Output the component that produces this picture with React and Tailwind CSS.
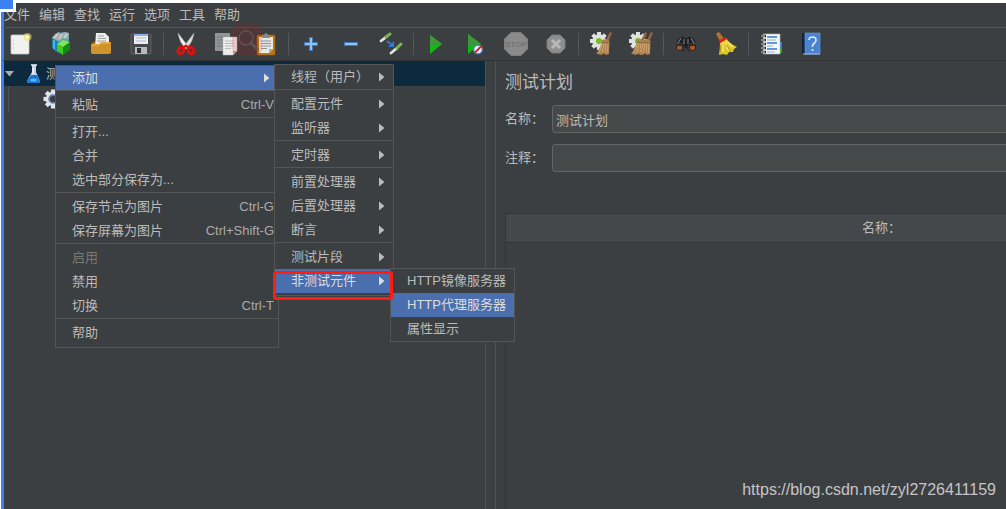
import React from 'react';
import clsx from 'clsx';

const MENU_BAR = ['文件', '编辑', '查找', '运行', '选项', '工具', '帮助'];

const MAIN_MENU = [
  [{ label: '添加', arrow: true, active: true }],
  [{ label: '粘贴', shortcut: 'Ctrl-V' }],
  [{ label: '打开...' }, { label: '合并' }, { label: '选中部分保存为...' }],
  [
    { label: '保存节点为图片', shortcut: 'Ctrl-G' },
    { label: '保存屏幕为图片', shortcut: 'Ctrl+Shift-G' },
  ],
  [{ label: '启用', disabled: true }, { label: '禁用' }, { label: '切换', shortcut: 'Ctrl-T' }],
  [{ label: '帮助' }],
];

const ADD_MENU = [
  [{ label: '线程（用户）', arrow: true }],
  [{ label: '配置元件', arrow: true }, { label: '监听器', arrow: true }],
  [{ label: '定时器', arrow: true }],
  [
    { label: '前置处理器', arrow: true },
    { label: '后置处理器', arrow: true },
    { label: '断言', arrow: true },
  ],
  [
    { label: '测试片段', arrow: true },
    { label: '非测试元件', arrow: true, active: true },
  ],
];

const NON_TEST_MENU = [
  [{ label: 'HTTP镜像服务器' }, { label: 'HTTP代理服务器', active: true }, { label: '属性显示' }],
];

const Icon = ({ children }) => (
  <svg viewBox="0 0 24 24" className="w-6 h-6" aria-hidden="true">
    {children}
  </svg>
);

const GEAR_TEETH = [0, 45, 90, 135, 180, 225, 270, 315];

const Gear = ({ cx, cy, r, fill, hole }) => (
  <g>
    {GEAR_TEETH.map((a) => (
      <rect
        key={a}
        x={cx - r * 0.22}
        y={cy - r}
        width={r * 0.44}
        height={r}
        fill={fill}
        transform={`rotate(${a} ${cx} ${cy})`}
      />
    ))}
    <circle cx={cx} cy={cy} r={r * 0.76} fill={fill} />
    <circle cx={cx} cy={cy} r={r * 0.34} fill={hole} />
  </g>
);

const Broom = ({ x = 0 }) => (
  <g transform={`translate(${x} 0)`}>
    <path d="M20 0 22 1 18.500 9 16 8Z" fill="#9a6638" />
    <path d="M12 8Q16 6 19.500 9L19 22 16 23 14 21.500 11 23 6 21.500Q11 16 12 8Z" fill="#ab8150" />
    <path d="M13 10 9 20.500M14.500 10 12 20.500M16 10 15 20.500M18 10 17.500 20.500" stroke="#d3ac74" strokeWidth="0.9" fill="none" />
    <path d="M12 10.500 19 11" stroke="#76512c" strokeWidth="0.8" />
  </g>
);

const NewIcon = () => (
  <Icon>
    <rect x="2" y="3" width="18" height="19" rx="1" fill="#f1f1ef" stroke="#c9c9c7" strokeWidth="0.8" />
    <path d="M4 8h1M4 12h1M4 16h1" stroke="#bbb" />
    <circle cx="18.5" cy="5" r="4" fill="#efe06a" opacity="0.6" />
    <circle cx="18.5" cy="5" r="2" fill="#fffbc0" />
  </Icon>
);

const TemplatesIcon = () => (
  <Icon>
    <path d="M3 6 10 9v12L6 19 3 15Z" fill="#1684b8" />
    <path d="M5 8v9" stroke="#65c4e4" strokeWidth="1.500" />
    <path d="m3 6 4-4 7-2 6 1v8l-9 2Z" fill="#5e9fae" />
    <path d="m3 6 3-4 4-2 2 2 4-2 4 1-1 6-5-1-4 3Z" fill="#a5aeae" />
    <path d="m5 6 4-4M10 7l3-5M15 6l3-4" stroke="#d4dad9" strokeWidth="1.300" />
    <path d="m8 12 6 3v8l-6-4Z" fill="#40cc20" />
    <path d="m14 15 7-5v8l-7 5Z" fill="#128d10" />
    <path d="m8 12 6-4 7 2-7 5Z" fill="#7bea50" />
  </Icon>
);

const OpenIcon = () => (
  <Icon>
    <path d="M3 10h18v10l-2 2H3Z" fill="#9b6813" />
    <path d="M7 1h9l4 4v9H6Z" fill="#eeeeec" />
    <path d="M9 4h6M9 6.500h8M8 9h9" stroke="#969696" strokeWidth="0.9" />
    <path d="M2 12h8l2-2h10v11q-1 1-2 1H4q-2 0-2-2Z" fill="#cf932b" />
    <path d="M3 13h7l2-2h9" stroke="#efc06a" fill="none" />
  </Icon>
);

const SaveIcon = () => (
  <Icon>
    <rect x="2" y="2" width="20" height="20" rx="1" fill="#47484b" stroke="#6c6d70" strokeWidth="0.7" />
    <path d="M5 2h14v10H5Z" fill="#eceef1" />
    <path d="M5 2h14v2H5Z" fill="#8aafe0" />
    <path d="M7 6h10M7 9h10" stroke="#b7bcc2" />
    <path d="M6 15h12v7H6Z" fill="#b9babb" />
    <path d="M8 16h4v5H8Z" fill="#2f3032" />
  </Icon>
);

const CutIcon = () => (
  <Icon>
    <path d="M4 1Q5 10 12 17l2.500-2Z" fill="#f0f0ee" stroke="#aaa" strokeWidth="0.5" />
    <path d="M20 1Q19 10 12 17l-2.500-2Z" fill="#deded9" stroke="#aaa" strokeWidth="0.5" />
    <ellipse cx="7" cy="18.500" rx="2.800" ry="3.400" fill="none" stroke="#dc1212" strokeWidth="3" transform="rotate(35 7 18.500)" />
    <ellipse cx="17" cy="18.500" rx="2.800" ry="3.400" fill="none" stroke="#dc1212" strokeWidth="3" transform="rotate(-35 17 18.500)" />
    <path d="m9 15.500 3-1.500 3 1.500" stroke="#dc1212" strokeWidth="2.500" fill="none" />
  </Icon>
);

const CopyIcon = () => (
  <Icon>
    <path d="M1 1h15v18H1Z" fill="#929594" />
    <path d="M3 5h10M3 8h10M3 11h10M3 14h7" stroke="#73787a" />
    <path d="M9 5h14v14l-4 4H9Z" fill="#ececea" stroke="#bbb" strokeWidth="0.5" />
    <path d="M11 9h9M11 11.500h9M11 14h9M11 16.500h6" stroke="#b5b5b5" strokeWidth="0.9" />
    <path d="M19 23v-4h4Z" fill="#aaa" />
  </Icon>
);

const PasteIcon = () => (
  <Icon>
    <rect x="3" y="3" width="18" height="20" rx="1" fill="#bd7814" stroke="#8f5a0d" strokeWidth="0.7" />
    <path d="M5 5h14v12l-4 4H5Z" fill="#e8e8e5" />
    <path d="M7 9h10M7 11.500h10M7 14h10M7 16.500h6" stroke="#929292" strokeWidth="1" />
    <path d="M15 21v-4h4Z" fill="#aaa" />
    <path d="M8 6V3h2q2-4 4 0h2v3Z" fill="#86888a" />
  </Icon>
);

const PlusIcon = () => (
  <Icon>
    <path d="M12 5v14M5 12h14" stroke="#3d78bd" strokeWidth="4" />
    <path d="M12 6v12M6 12h12" stroke="#94c1f0" strokeWidth="2" />
  </Icon>
);

const MinusIcon = () => (
  <Icon>
    <path d="M5 12h14" stroke="#3d78bd" strokeWidth="4" />
    <path d="M6 12h12" stroke="#94c1f0" strokeWidth="2" />
  </Icon>
);

const ToggleIcon = () => (
  <Icon>
    <path d="m2 9 5-4" stroke="#dfe6dc" strokeWidth="2.800" strokeLinecap="round" />
    <path d="m7 5 4-3" stroke="#78b552" strokeWidth="3" strokeLinecap="round" />
    <path d="m12 21 6-5" stroke="#dfe6dc" strokeWidth="2.800" strokeLinecap="round" />
    <path d="m18 16 4-4" stroke="#78b552" strokeWidth="3" strokeLinecap="round" />
    <path d="m8 9 5 4" stroke="#2d7be5" strokeWidth="1.800" />
    <path d="M15 9v6H9Z" fill="#2d7be5" />
  </Icon>
);

const StartIcon = () => (
  <Icon>
    <path d="m6 3 12 9-12 10Z" fill="#10bb14" />
    <path d="m6 3 12 9-12 2Z" fill="#3d963b" />
  </Icon>
);

const StartNoPausesIcon = () => (
  <Icon>
    <path d="m4 2 13 10L4 22Z" fill="#10b414" />
    <path d="m4 2 13 10-13 2Z" fill="#3d963b" />
    <circle cx="14" cy="17.500" r="4.300" fill="#e9edf4" stroke="#4f7dbb" strokeWidth="1.200" />
    <path d="m11 20.500 6-6" stroke="#d71d24" strokeWidth="1.800" />
  </Icon>
);

const StopIcon = () => (
  <Icon>
    <path d="M7 0.500h10l6.500 6.500v10L17 23.500H7L0.500 17V7Z" fill="#8b8b8b" stroke="#7e7e7e" />
    <text x="12" y="15" textAnchor="middle" fontSize="8" fontWeight="bold" fill="#727272" fontFamily="Liberation Sans, sans-serif">
      STOP
    </text>
  </Icon>
);

const ShutdownIcon = () => (
  <Icon>
    <path d="M8 3h8l5 5v8l-5 5H8l-5-5V8Z" fill="#8e8e8e" stroke="#7b7b7b" />
    <path d="m8 8 8 8m0-8-8 8" stroke="#b9b9b9" strokeWidth="3" />
  </Icon>
);

const ClearIcon = () => (
  <Icon>
    <Gear cx={10} cy={9} r={9} fill="#e0e2df" hole="#78bd26" />
    <Broom x={1} />
  </Icon>
);

const ClearAllIcon = () => (
  <Icon>
    <Gear cx={9} cy={9} r={9} fill="#e0e2df" hole="#78bd26" />
    <Broom x={-4} />
    <Broom x={2} />
  </Icon>
);

const SearchIcon = () => (
  <Icon>
    <path d="M4 7 7 5h3l2 2 2-2h3l3 2 3 8-4 5-5-1-2-4-2 4-5 1-4-5Z" fill="#1d1e20" />
    <path d="m7 6-4 7M17 6l4 7M10 7v5M14 7v5" stroke="#77797b" strokeWidth="1.200" />
    <ellipse cx="5.500" cy="15.500" rx="4.500" ry="3.800" fill="#17181a" stroke="#4c4e50" />
    <ellipse cx="18.500" cy="15.500" rx="4.500" ry="3.800" fill="#17181a" stroke="#4c4e50" />
    <ellipse cx="5.500" cy="15.800" rx="2.800" ry="2.200" fill="#a65a29" />
    <ellipse cx="18.500" cy="15.800" rx="2.800" ry="2.200" fill="#a65a29" />
  </Icon>
);

const SearchResetIcon = () => (
  <Icon>
    <path d="M2 2Q4-1 6 1l4 6-4 2Z" fill="#b07530" />
    <path d="M6 10 12 6Q16 12 23 15l-3 2-1 3-4 0-2 3-4-1-4 1Q6 17 6 10Z" fill="#dec62a" />
    <path d="m9 10 0 10M11 10l3 8M12 9l7 6" stroke="#f8ed78" strokeWidth="1.200" />
    <path d="m5 10 7-4" stroke="#d9221a" strokeWidth="2.800" />
    <path d="m7 13-1 8M12 13l5 6" stroke="#aa8c10" strokeWidth="0.8" />
  </Icon>
);

const FunctionIcon = () => (
  <Icon>
    <path d="M20 10h3v5h-3Z" fill="#267ce0" />
    <path d="M20 15h3v6h-3Z" fill="#22a322" />
    <rect x="4" y="2" width="17" height="20" fill="#f7f7f8" stroke="#b5b7bb" strokeWidth="0.6" />
    <path d="M8 5h10M8 11h10M8 17h10" stroke="#2f78d0" strokeWidth="1.300" />
    <path d="M8 8h9M8 14h6M8 20h8" stroke="#8daedb" strokeWidth="1" />
    <path d="M2 4h5M2 8h5M2 12h5M2 16h5M2 20h5" stroke="#27292b" strokeWidth="2.400" />
    <path d="M2 4h4M2 8h4M2 12h4M2 16h4M2 20h4" stroke="#dedede" strokeWidth="1.200" />
  </Icon>
);

const HelpIcon = () => (
  <Icon>
    <path d="M3 1h4v21H3Z" fill="#14243a" />
    <path d="M6 1h15v21H6Z" fill="#4a84d0" stroke="#5f96dc" strokeWidth="0.7" />
    <path d="M4 22h17" stroke="#a9bdd8" />
    <path d="M10 8q0-3 3.500-3T17 8q0 2-2 3.500T13.500 15" stroke="#dfeafa" strokeWidth="1.600" fill="none" />
    <circle cx="13.500" cy="18" r="1.100" fill="#dfeafa" />
  </Icon>
);

const TOOLBAR = [
  [
    { name: '新建', icon: NewIcon },
    { name: '模板', icon: TemplatesIcon },
    { name: '打开', icon: OpenIcon },
    { name: '保存', icon: SaveIcon },
  ],
  [
    { name: '剪切', icon: CutIcon },
    { name: '复制', icon: CopyIcon },
    { name: '粘贴', icon: PasteIcon },
  ],
  [
    { name: '展开', icon: PlusIcon },
    { name: '收起', icon: MinusIcon },
    { name: '切换', icon: ToggleIcon },
  ],
  [
    { name: '启动', icon: StartIcon },
    { name: '不停顿开始', icon: StartNoPausesIcon },
    { name: '停止', icon: StopIcon },
    { name: '关闭', icon: ShutdownIcon },
  ],
  [
    { name: '清除', icon: ClearIcon },
    { name: '清除全部', icon: ClearAllIcon },
  ],
  [
    { name: '查找', icon: SearchIcon },
    { name: '重置查找', icon: SearchResetIcon },
  ],
  [
    { name: '函数助手', icon: FunctionIcon },
    { name: '帮助', icon: HelpIcon },
  ],
];

const Toolbar = () => (
  <div className="relative flex items-center gap-1 h-[34px] -ml-px border-t border-b border-t-[#515354] border-b-[#323435] shrink-0">
    {TOOLBAR.map((group, i) => (
      <React.Fragment key={i}>
        {i > 0 && <span className="w-px h-[22px] bg-[#55585a] shrink-0" />}
        {group.map(({ name, icon: ToolIcon }) => (
          <button key={name} type="button" aria-label={name} className="w-9 h-8 flex items-center justify-center shrink-0">
            <ToolIcon />
          </button>
        ))}
      </React.Fragment>
    ))}
    {/* Faded lens between copy and paste */}
    <div className="absolute left-[229px] -top-1 w-[30px] h-[31px] rounded-md bg-red-700/15">
      <svg viewBox="0 0 30 31" className="w-full h-full" aria-hidden="true">
        <circle cx="14" cy="14" r="7" fill="none" stroke="#5f5254" strokeWidth="1.500" />
        <path d="m19 19 6 6" stroke="#5f5254" strokeWidth="3" strokeLinecap="round" />
      </svg>
    </div>
  </div>
);

const MenuItem = ({ label, shortcut, arrow, active, disabled }) => (
  <button
    type="button"
    role="menuitem"
    disabled={disabled}
    className={clsx(
      'flex items-center justify-between w-full h-6 pl-4 text-left whitespace-nowrap',
      active ? 'bg-[#4b6eaf] text-[#dddddd]' : disabled ? 'text-[#777777]' : 'text-[#bbbbbb]',
      arrow ? 'pr-2' : 'pr-1'
    )}
  >
    <span>{label}</span>
    {shortcut && <span className="text-[#aaaaaa]">{shortcut}</span>}
    {arrow && (
      <svg viewBox="0 0 6 10" className="w-1.5 h-2.5" aria-hidden="true">
        <path d="M0 0.500 5.500 5 0 9.500Z" fill={active ? '#dddddd' : '#bbbbbb'} />
      </svg>
    )}
  </button>
);

const PopupMenu = ({ groups, label, className }) => (
  <div role="menu" aria-label={label} className={clsx('absolute bg-[#3c3f41] border border-[#555555]', className)}>
    {groups.map((group, i) => (
      <div key={i} className={clsx(i > 0 && 'border-t border-[#555555] pt-0.5')}>
        {group.map((item) => (
          <MenuItem key={item.label} {...item} />
        ))}
      </div>
    ))}
  </div>
);

const TestTree = () => (
  <div className="w-[482px] shrink-0 border-r border-[#515151]">
    <div className="flex items-center h-[25px] bg-[#0d293e]">
      <svg viewBox="0 0 9 6" className="w-[9px] h-1.5 ml-px mr-3" aria-hidden="true">
        <path d="M0 0h9L4.500 5.500Z" fill="#adadad" />
      </svg>
      <svg viewBox="0 0 16 20" className="w-4 h-5 mr-1" aria-hidden="true">
        <path d="M6 1h4v7l4 9q0 2-2 2H3q-2 0-2-2l5-9Z" fill="#c5d6e8" />
        <path d="m5 11h6l3 6q0 2-2 2H3q-2 0-2-2Z" fill="#1975d5" />
        <path d="M5 1h6" stroke="#eef3f8" strokeWidth="1.500" />
        <path d="M7 4v6" stroke="#fff" />
        <ellipse cx="7.500" cy="16" rx="3.500" ry="1.500" fill="#5bb4ff" />
      </svg>
      <span className="text-[#bbbbbb]">测</span>
    </div>
    <div className="ml-1 h-[26px] border-l border-[#505354] pl-[34px] flex items-center">
      <svg viewBox="0 0 20 20" className="w-5 h-5" aria-hidden="true">
        <Gear cx={10} cy={10} r={9.5} fill="#dfe5ec" hole="#3c3f41" />
        <circle cx="10" cy="10" r="4" fill="none" stroke="#5879a8" strokeWidth="1.500" />
      </svg>
    </div>
  </div>
);

const Field = ({ id, label, value }) => (
  <div className="flex items-center">
    <label htmlFor={id} className="w-[47px] shrink-0">{label}</label>
    <input
      id={id}
      type="text"
      defaultValue={value}
      className="flex-1 h-7 px-[3px] rounded-[3px] bg-[#45494a] border border-[#646464] text-[#bbbbbb] outline-none"
    />
  </div>
);

const PlanPanel = () => (
  <div className="flex-1 min-w-0 overflow-hidden flex flex-col ml-[9px] border-l border-[#515151] pl-[9px]">
    {/* The form keeps its own width and runs past the window edge */}
    <div className="min-w-[752px] flex-1 flex flex-col">
      <h1 className="text-[17px] leading-6 mt-[10px] mb-[10px]">测试计划</h1>
      <div className="flex flex-col gap-[11px]">
        <Field id="plan-name" label="名称：" value="测试计划" />
        <Field id="plan-comment" label="注释：" value="" />
      </div>
      <div className="flex-1 mt-[41px] border-l border-t border-[#323435]">
        <table className="w-full">
          <thead>
            <tr>
              <th className="h-7 p-0 font-normal bg-[#45484a] border-b border-[#323435]">名称：</th>
            </tr>
          </thead>
        </table>
      </div>
    </div>
  </div>
);

const App = () => {
  return (
    <div className="relative min-h-screen flex flex-col bg-white pt-[3px] pl-px overflow-hidden text-[13px] text-[#bbbbbb] font-['Liberation_Sans','Noto_Sans_CJK_SC',sans-serif]">
      <div className="flex-1 flex flex-col bg-[#3c3f41] border-l-3 border-[#3b82f0]">
        <nav className="flex items-center gap-[9px] h-6 shrink-0">
          {MENU_BAR.map((name) => (
            <button key={name} type="button">{name}</button>
          ))}
        </nav>
        <Toolbar />
        <main className="flex-1 flex">
          <TestTree />
          <PlanPanel />
        </main>
      </div>

      <PopupMenu groups={MAIN_MENU} label="节点" className="left-[55px] top-[65px] w-[224px] pb-0.5" />
      <PopupMenu groups={ADD_MENU} label="添加" className="left-[274px] top-16 w-[120px] pb-0.5" />
      <PopupMenu groups={NON_TEST_MENU} label="非测试元件" className="left-[390px] top-[268px] w-[125px]" />
      <div className="absolute left-[273px] top-[271px] w-[120px] h-[29px] border-3 border-[#ff1d12] rounded-[3px]" />

      {/* Selection handle in the corner */}
      <div className="absolute left-0 top-0 w-4 h-3 bg-[#3b82f0] border-r-3 border-b-3 border-white" />

      <a href="https://blog.csdn.net/zyl2726411159" className="absolute right-[10px] bottom-[7px] text-base text-[#c4c5c6]">
        https://blog.csdn.net/zyl2726411159
      </a>
    </div>
  );
};

export default App;
